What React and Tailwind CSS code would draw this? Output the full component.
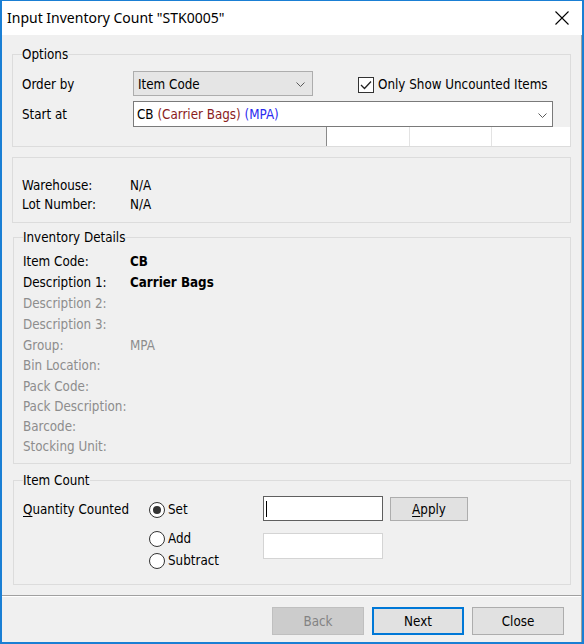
import React from 'react';

const Chevron = () => (
  <svg width="9" height="5" viewBox="0 0 9 5" className="shrink-0">
    <path d="M0.5 0.5 L4.5 4.5 L8.5 0.5" fill="none" stroke="#5a5a5a" strokeWidth="1" />
  </svg>
);

const Checkbox = () => (
  <span className="flex h-[16px] w-[16px] shrink-0 items-center justify-center border border-[#333333] bg-white">
    <svg width="12" height="10" viewBox="0 0 12 10">
      <path d="M1 5 L4.5 8.5 L11 1.5" fill="none" stroke="#222222" strokeWidth="1.3" />
    </svg>
  </span>
);

const Radio = ({ checked }) => (
  <span className="flex h-[16px] w-[16px] shrink-0 items-center justify-center rounded-full border border-[#333333] bg-white">
    {checked && <span className="h-[8px] w-[8px] rounded-full bg-[#333333]" />}
  </span>
);

const details = [
  { label: 'Item Code:', value: 'CB', h: 'h-[20px]', on: true },
  { label: 'Description 1:', value: 'Carrier Bags', h: 'h-[21px]', on: true },
  { label: 'Description 2:', value: '', h: 'h-[22px]' },
  { label: 'Description 3:', value: '', h: 'h-[20px]' },
  { label: 'Group:', value: 'MPA', h: 'h-[21px]' },
  { label: 'Bin Location:', value: '', h: 'h-[20px]' },
  { label: 'Pack Code:', value: '', h: 'h-[21px]' },
  { label: 'Pack Description:', value: '', h: 'h-[20px]' },
  { label: 'Barcode:', value: '', h: 'h-[20px]' },
  { label: 'Stocking Unit:', value: '', h: 'h-[20px]' },
];

export default function App() {
  return (
    <div className="flex h-[644px] w-[584px] flex-col border-t border-r-2 border-b-2 border-l-2 border-[#1a7fd4] bg-white text-[13.3px] leading-[16px] text-black font-['DejaVu_Sans_Condensed','DejaVu_Sans',sans-serif] font-stretch-condensed">
      {/* title bar */}
      <div className="flex h-[34px] shrink-0 items-center justify-between bg-white pl-[5px] pr-[12px]">
        <span className="font-['Noto_Sans',sans-serif] font-stretch-normal text-[14px] text-black">
          Input Inventory Count "STK0005"
        </span>
        <svg width="16" height="16" viewBox="0 0 16 16">
          <path d="M1.5 1.5 L14.5 14.5 M14.5 1.5 L1.5 14.5" stroke="#000" strokeWidth="1.1" />
        </svg>
      </div>

      <div className="flex flex-1 flex-col border-r border-[#a0a0a0] bg-[#f0f0f0]">
        {/* Options */}
        <fieldset className="ml-[10px] mt-[10px] w-[559px] border border-[#dcdcdc] pl-[9px]">
          <legend className="h-[18px] pt-[2px] leading-[16px]">Options</legend>
          <div className="mt-[8px] flex h-[25px] items-center">
            <div className="w-[111px] pt-[2px]">Order by</div>
            <div className="flex h-[25px] w-[180px] items-center justify-between border border-[#adadad] bg-[#e5e5e5] pl-[4px] pr-[7px] pt-[2px]">
              <span>Item Code</span>
              <Chevron />
            </div>
            <label className="ml-[45px] flex items-center gap-[4px] pt-[2px]">
              <Checkbox />
              <span>Only Show Uncounted Items</span>
            </label>
          </div>
          <div className="mt-[5px] flex h-[26px] items-center">
            <div className="w-[111px] pt-[2px]">Start at</div>
            <div className="flex h-[26px] w-[420px] items-center justify-between border border-[#7a7a7a] bg-white pl-[3px] pr-[5px] pt-[2px]">
              <span>
                CB <span className="text-[#8b1c1c]">(Carrier Bags)</span>{' '}
                <span className="text-[#2b2bf0]">(MPA)</span>
              </span>
              <Chevron />
            </div>
          </div>
          <div className="ml-[304px] flex h-[19px] w-[244px] border-l border-[#8a8a8a] bg-white">
            <div className="w-[83px] border-r border-[#e3e3e3]" />
            <div className="w-[82px] border-r border-[#e3e3e3]" />
            <div className="flex-1" />
          </div>
        </fieldset>

        {/* Warehouse / lot */}
        <div className="ml-[10px] mt-[10px] w-[559px] border border-[#dcdcdc] pb-[9px] pl-[9px] pt-[17px]">
          <div className="flex h-[19px] items-center pt-[2px]">
            <div className="w-[108px]">Warehouse:</div>
            <div>N/A</div>
          </div>
          <div className="flex h-[19px] items-center pt-[2px]">
            <div className="w-[108px]">Lot Number:</div>
            <div>N/A</div>
          </div>
        </div>

        {/* Inventory Details */}
        <fieldset className="ml-[11px] mt-[5px] w-[558px] border border-[#dcdcdc] pb-[7px] pl-[9px]">
          <legend className="h-[18px] pt-[2px] leading-[16px]">Inventory Details</legend>
          <div className="mt-[5px] flex flex-col">
            {details.map((d) => (
              <div key={d.label} className={`flex items-center pt-[2px] ${d.h} ${d.on ? 'text-black' : 'text-[#8d8d8d]'}`}>
                <div className="w-[107px]">{d.label}</div>
                <div className={d.on ? 'font-bold' : ''}>{d.value}</div>
              </div>
            ))}
          </div>
        </fieldset>

        {/* Item Count */}
        <fieldset className="ml-[11px] mt-[7px] w-[558px] border border-[#dcdcdc] pb-[13px] pl-[9px]">
          <legend className="h-[18px] pt-[2px] leading-[16px]">Item Count</legend>
          <div className="mt-[7px] flex items-start">
            <div className="flex h-[25px] w-[126px] items-center pt-[2px]">
              <span>
                <span className="underline underline-offset-2">Q</span>uantity Counted
              </span>
            </div>
            <div className="flex w-[114px] flex-col">
              <div className="flex h-[25px] items-center gap-[3px] pt-[2px]">
                <Radio checked />
                <span>Set</span>
              </div>
              <div className="mt-[6px] flex h-[22px] items-center gap-[3px] pt-[2px]">
                <Radio />
                <span>Add</span>
              </div>
              <div className="flex h-[22px] items-center gap-[3px] pt-[2px]">
                <Radio />
                <span>Subtract</span>
              </div>
            </div>
            <div className="flex flex-col">
              <div className="flex h-[25px] w-[120px] items-center border border-[#5f5f5f] bg-white pl-[2px]">
                <span className="h-[16px] w-px bg-black" />
              </div>
              <div className="mt-[12px] h-[26px] w-[120px] border border-[#d4d4d4] bg-white" />
            </div>
            <button className="ml-[7px] mt-[1px] h-[24px] w-[78px] border border-[#adadad] bg-[#e1e1e1] pt-[2px]">
              <span className="underline underline-offset-2">A</span>pply
            </button>
          </div>
        </fieldset>

        <div className="mt-[10px] h-[2px] border-t border-b border-t-[#a0a0a0] border-b-white" />

        <div className="mt-[10px] flex justify-end gap-[8px] pr-[17px]">
          <button className="h-[28px] w-[92px] border border-[#bfbfbf] bg-[#cccccc] pt-[2px] text-[#838383]">Back</button>
          <button className="h-[28px] w-[92px] border-2 border-[#0078d7] bg-[#e1e1e1] pt-[2px]">Next</button>
          <button className="h-[28px] w-[92px] border border-[#adadad] bg-[#e1e1e1] pt-[2px]">Close</button>
        </div>
      </div>
    </div>
  );
}
